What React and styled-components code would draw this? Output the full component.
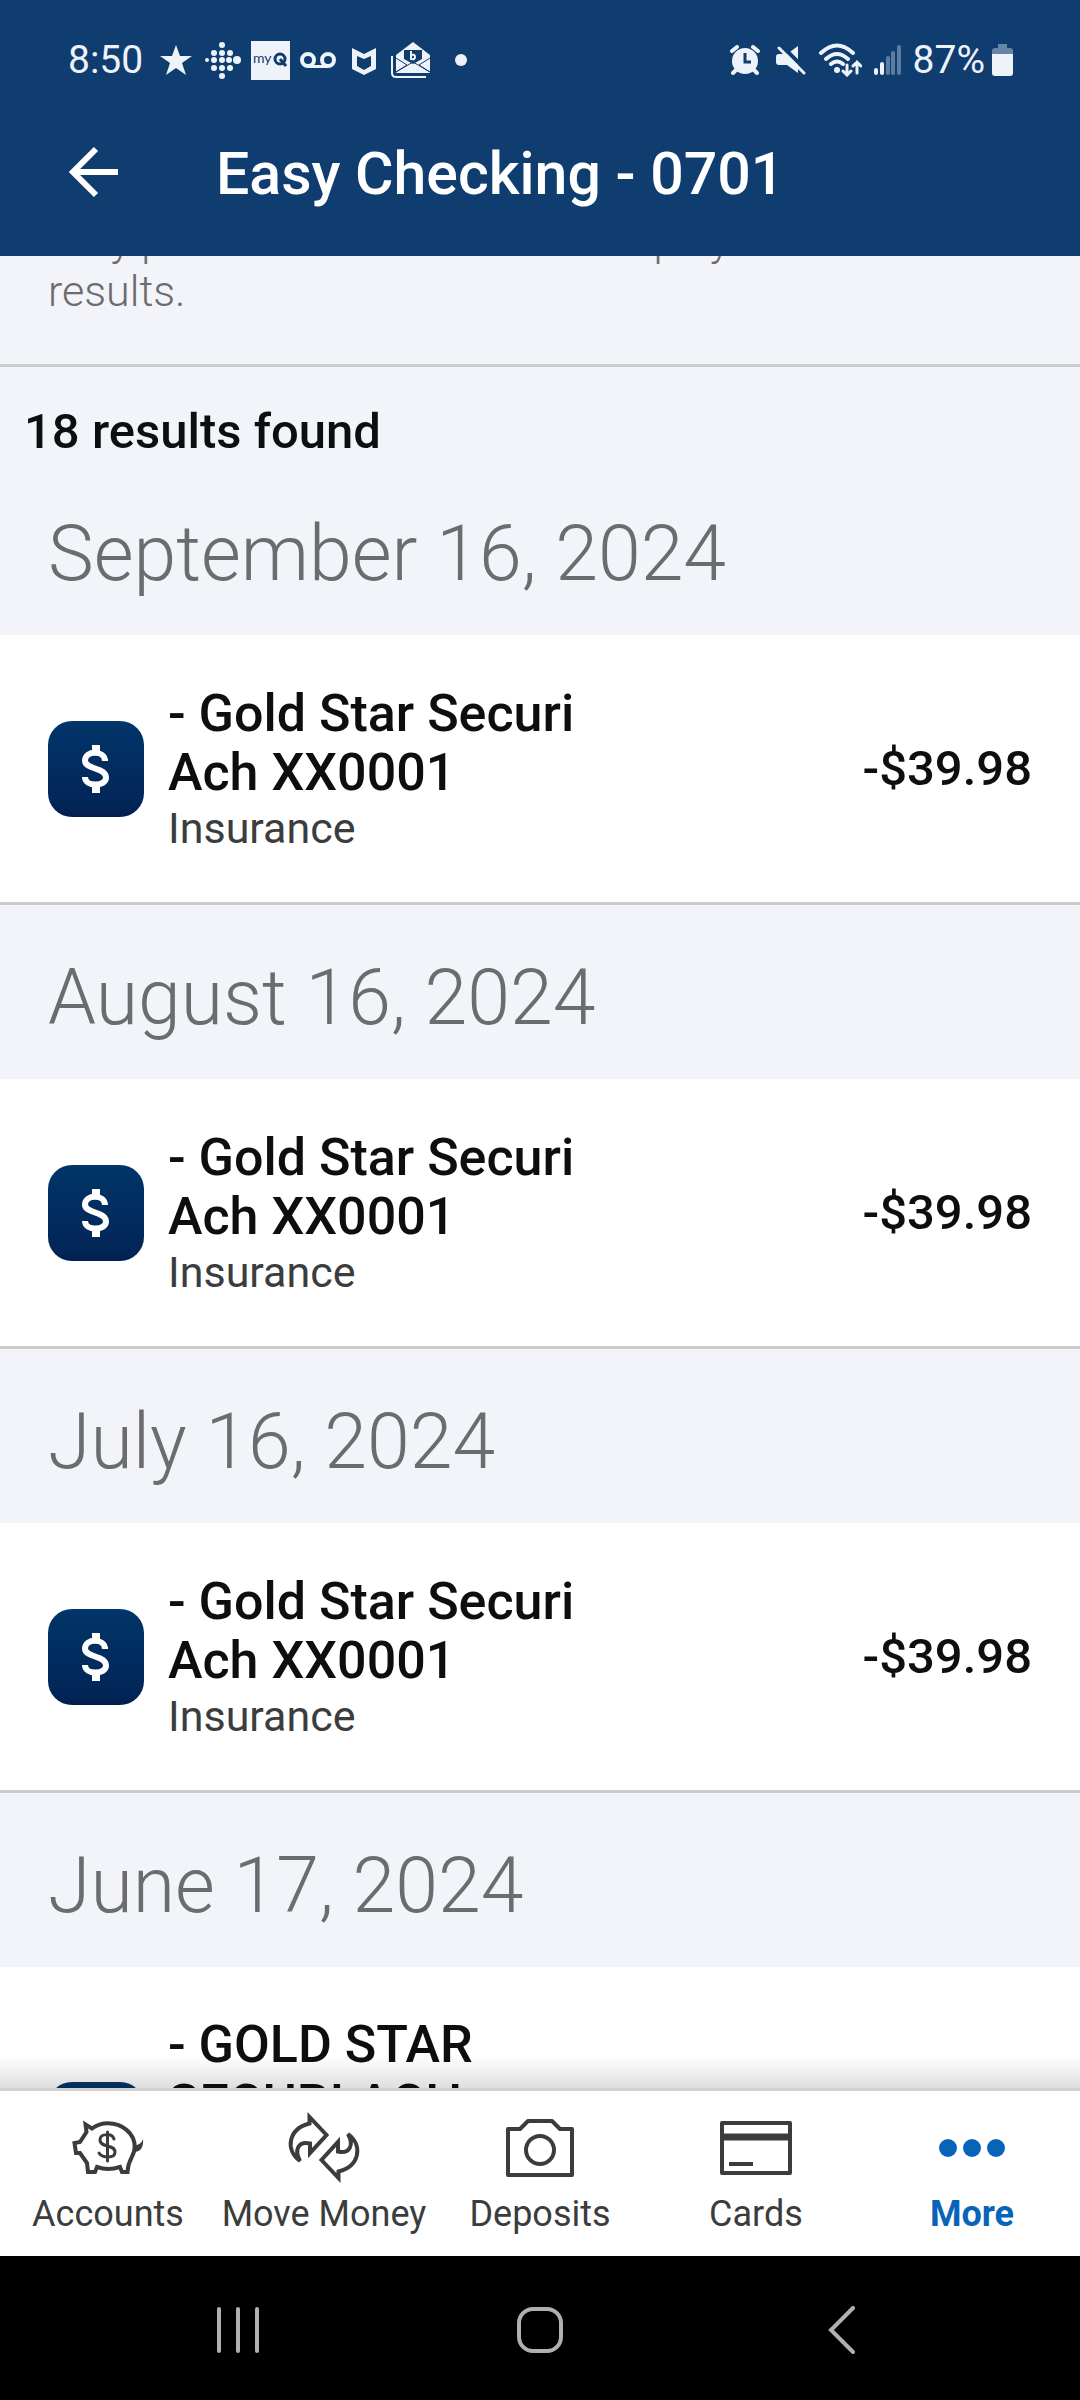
import React from 'react'
import styled, { createGlobalStyle } from 'styled-components'

const GlobalStyle = createGlobalStyle`
    * {
        box-sizing: border-box;
    }

    body {
        margin: 0;
        background: #f3f4f9;
        font-family: Roboto, "Liberation Sans", sans-serif;
        color: #0c0e10;
    }

    h1, h2, h3, p, ul {
        margin: 0;
        padding: 0;
    }

    button {
        border: 0;
        padding: 0;
        background: none;
        font: inherit;
        color: inherit;
    }
`

const Screen = styled.div`
    display: flex;
    flex-direction: column;
    height: 100vh;
    overflow: hidden;
`

const TopArea = styled.header`
    flex: none;
    height: 256px;
    background: #103d6f;
    color: #fff;
`

const StatusBar = styled.div`
    display: flex;
    align-items: center;
    justify-content: space-between;
    height: 120px;
    padding: 0 67px 0 68px;
    color: #eef2f9;
    font-size: 39px;
    line-height: 48px;

    svg {
        display: block;
        fill: currentColor;
    }
`

const StatusGroup = styled.div`
    display: flex;
    align-items: center;
    gap: ${(props) => props.$gap}px;
`

const TitleBar = styled.div`
    display: flex;
    align-items: center;
    height: 108px;
    padding-left: 66px;
    gap: 92px;

    h1 {
        font-size: 59px;
        font-weight: 500;
        line-height: 72px;
    }

    svg {
        display: block;
    }
`

const Content = styled.main`
    flex: 1;
    min-height: 0;
    display: flex;
    flex-direction: column;
    overflow: hidden;
`

// the list is scrolled, so the note above it is cut by the header
const Note = styled.div`
    flex: none;
    display: flex;
    flex-direction: column;
    justify-content: flex-end;
    height: 111px;
    padding: 0 48px 47px;
    border-bottom: 3px solid #cacccc;
    color: #6b6c6e;
    font-size: 43px;
    font-weight: 300;
    line-height: 51px;
    overflow: hidden;
`

const ResultCount = styled.h2`
    flex: none;
    padding: 36px 24px 0;
    font-size: 49px;
    font-weight: 500;
    line-height: 58px;
`

const MonthTitle = styled.h3`
    flex: none;
    height: 174px;
    padding: 47px 48px 0;
    color: #6b6c6e;
    font-size: 77px;
    font-weight: 300;
    line-height: 92px;
`

const Item = styled.div`
    flex: none;
    display: flex;
    align-items: center;
    gap: 24px;
    min-height: 270px;
    padding: 48px;
    background: #fff;
    border-bottom: 3px solid #cacccc;
`

const ItemIcon = styled.div`
    display: flex;
    align-items: center;
    justify-content: center;
    width: 96px;
    height: 96px;
    border-radius: 24px;
    background: linear-gradient(#013569, #022557 90%, #011f4b);
`

const ItemText = styled.div`
    flex: 1;
`

const ItemName = styled.p`
    width: 440px;
    font-size: 52px;
    font-weight: 500;
    line-height: 59px;
`

const Category = styled.p`
    color: #3b3c3e;
    font-size: 43px;
    line-height: 52px;
`

const Amount = styled.span`
    font-size: 49px;
    font-weight: 500;
`

const TabBar = styled.nav`
    position: relative;
    flex: none;
    display: grid;
    grid-template-columns: repeat(5, 1fr);
    height: 168px;
    background: #fff;
    border-top: 3px solid #d2d2d2;

    &::before {
        content: "";
        position: absolute;
        left: 0;
        right: 0;
        bottom: 100%;
        height: 32px;
        margin-bottom: 3px;
        background: linear-gradient(rgba(0, 0, 0, 0), rgba(0, 0, 0, 0.13));
    }
`

const Tab = styled.a`
    display: flex;
    flex-direction: column;
    align-items: center;
    padding-top: 18px;
    color: ${(props) => (props.$active ? '#0864b9' : '#3b3c3c')};
    font-size: 36px;
    font-weight: ${(props) => (props.$active ? 700 : 400)};
    line-height: 44px;
    text-decoration: none;
    white-space: nowrap;

    svg {
        display: block;
        margin-bottom: 7px;
    }
`

const SystemBar = styled.div`
    flex: none;
    display: grid;
    grid-template-columns: repeat(3, 1fr);
    height: 144px;
    padding: 4px 87px 0;
    background: #000;

    button {
        display: flex;
        align-items: center;
        justify-content: center;
    }
`

const transactions = [
    { date: 'September 16, 2024', name: '- Gold Star Securi Ach XX0001', category: 'Insurance', amount: '-$39.98' },
    { date: 'August 16, 2024', name: '- Gold Star Securi Ach XX0001', category: 'Insurance', amount: '-$39.98' },
    { date: 'July 16, 2024', name: '- Gold Star Securi Ach XX0001', category: 'Insurance', amount: '-$39.98' },
    { date: 'June 17, 2024', name: '- GOLD STAR SECURI ACH XXXXXX0001', category: 'Insurance', amount: '-$39.98' },
]

const dots = [
    [18, 3, 3], [10, 11, 3], [18, 11, 3], [26, 11, 3],
    [3, 18, 2], [10, 18, 3], [18, 18, 3], [25, 18, 3], [33, 18, 4],
    [10, 26, 3], [18, 26, 3], [26, 26, 3], [18, 34, 3],
]

function NotificationIcons() {
    return (
        <>
            <svg width="41" height="32" viewBox="-7 0 41 32">
                <path d="M16 1l4 11h12l-10 7 4 12-10-7-10 7 4-12L0 12h12z" />
            </svg>
            <svg width="37" height="37" viewBox="0 0 37 37">
                {dots.map(([x, y, r]) => <circle key={x + '-' + y} cx={x} cy={y} r={r} />)}
            </svg>
            <svg width="39" height="39" viewBox="0 0 39 39">
                <path d="M0 0h39v39H0z" />
                <text x="2" y="22" fontSize="14" fill="#103d6f" fontFamily="Lato">my</text>
                <g fill="none" stroke="#103d6f" strokeWidth="3">
                    <circle cx="29" cy="18" r="5" />
                    <path d="M29 18l6 7" />
                </g>
            </svg>
            <svg width="36" height="18" viewBox="0 0 36 18">
                <g fill="none" stroke="currentColor" strokeWidth="4">
                    <circle cx="8" cy="9" r="6" />
                    <circle cx="28" cy="9" r="6" />
                    <path d="M8 15.5h20" strokeWidth="3" />
                </g>
            </svg>
            <svg width="35" height="29" viewBox="-5 -1 35 29">
                <path d="M1 1l12 6 12-6v21l-12 6-12-6zM6 9v10l7 4 7-4V9l-7 3z" fillRule="evenodd" />
            </svg>
            <svg width="40" height="38" viewBox="0 0 40 38">
                <path d="M1 15v17q0 4 4 4h30" fill="none" stroke="currentColor" strokeWidth="2" />
                <path d="M5 14L22 1l17 13v18H5z" />
                <path d="M5 17l11 7L5 31M39 17l-11 7 11 7M5 31l17-10 17 10" fill="none" stroke="#103d6f" strokeWidth="1" />
                <path d="M13 9h18v9l-9 5-9-5z" fill="#103d6f" />
                <path d="M20 10v8q4 1 4-2t-4-2" fill="none" stroke="currentColor" strokeWidth="2" />
            </svg>
            <svg width="26" height="12" viewBox="-14 0 26 12">
                <circle cx="6" cy="6" r="6" />
            </svg>
        </>
    )
}

function SystemIcons() {
    return (
        <>
            <svg width="34" height="30" viewBox="0 0 34 30">
                <circle cx="15" cy="16" r="13" />
                <path d="M2 6l5-4M28 6l-5-4M6 25l-3 3M24 25l3 3" stroke="currentColor" strokeWidth="4" strokeLinecap="round" />
                <path d="M15 8v9h6" fill="none" stroke="#103d6f" strokeWidth="3" />
            </svg>
            <svg width="30" height="30" viewBox="0 0 30 30">
                <path d="M22 1v27L11 20H3q-3 0-3-3v-5q0-3 3-3h8z" />
                <path d="M5 0l25 25" stroke="#103d6f" strokeWidth="4" />
                <path d="M3 3l25 25" stroke="currentColor" strokeWidth="3" strokeLinecap="round" />
            </svg>
            <svg width="44" height="34" viewBox="0 0 44 34">
                <g fill="none" stroke="currentColor" strokeWidth="4" strokeLinecap="round">
                    <path d="M3 10q16-15 32 0M8 16q11-10 22 0M13 21q6-5 12 0" />
                    <path d="M29 22v9M25 28l4 4 4-4M39 30V19M35 23l4-4 4 4" strokeWidth="3" />
                </g>
                <circle cx="19" cy="27" r="3" />
            </svg>
            <svg width="27" height="30" viewBox="0 0 27 30">
                <rect x="0" y="23" width="4" height="7" rx="2" />
                <rect x="6" y="17" width="4" height="13" rx="2" />
                <g opacity="0.35">
                    <rect x="12" y="11" width="4" height="19" rx="2" />
                    <rect x="17" y="6" width="4" height="24" rx="2" />
                    <rect x="23" y="0" width="4" height="30" rx="2" />
                </g>
            </svg>
        </>
    )
}

function DollarIcon() {
    return (
        <svg width="32" height="52" viewBox="0 0 32 52" fill="none" stroke="#fff" strokeWidth="6">
            <path d="M25 18C25 7 5 7 5 17.500C5 27 26 24 26 34.500C26 44 5 44 5 34" />
            <path d="M16 2v7M16 43v7" strokeWidth="8" />
        </svg>
    )
}

function PiggyIcon() {
    return (
        <svg width="76" height="76" viewBox="0 0 76 76" fill="none" stroke="currentColor" strokeWidth="4">
            <path d="M15.500 15.500L22 19.500Q29 14.300 37.700 14.300C52 14.300 64.700 24 64.700 38C64.700 48 58 49 57.500 63H52L50 58Q38 62 27 58L25 63H18L17 54L10 44H6L4.500 34L10 33L16.500 23z" />
            <path d="M65 36Q71 36 73 30Q74 42 65 43z" fill="currentColor" stroke="none" />
            <path d="M44 30c-2-6-14-6-14 1 0 8 15 4 15 12 0 7-13 6-16 1M37.500 23v29" strokeWidth="3" strokeLinecap="round" />
        </svg>
    )
}

function MoveIcon() {
    const arrow = 'M14 52C-1 41 2 20 23.500 14.500V8L40.500 26L24 44V34.500C12 32 8 41 14 52z'
    return (
        <svg width="76" height="76" viewBox="0 0 76 76" fill="none" stroke="currentColor" strokeWidth="4">
            <path d={arrow} />
            <path d={arrow} transform="rotate(180 38 38.500)" />
        </svg>
    )
}

function CameraIcon() {
    return (
        <svg width="76" height="76" viewBox="0 0 76 76" fill="none" stroke="currentColor" strokeWidth="4" strokeLinejoin="round">
            <path d="M6 20h12l8-8h24l8 8h12v46H6z" />
            <circle cx="38" cy="41" r="14" />
        </svg>
    )
}

function CardIcon() {
    return (
        <svg width="76" height="76" viewBox="0 0 76 76" fill="none" stroke="currentColor" strokeWidth="4" strokeLinejoin="round">
            <path d="M4 14h68v50H4z" />
            <path d="M4 28h68" strokeWidth="7" />
            <path d="M11 55h24" />
        </svg>
    )
}

function MoreIcon() {
    return (
        <svg width="76" height="76" viewBox="0 0 76 76" fill="currentColor">
            <circle cx="14" cy="39" r="9" />
            <circle cx="38" cy="39" r="9" />
            <circle cx="62" cy="39" r="9" />
        </svg>
    )
}

const tabs = [
    { label: 'Accounts', icon: <PiggyIcon /> },
    { label: 'Move Money', icon: <MoveIcon /> },
    { label: 'Deposits', icon: <CameraIcon /> },
    { label: 'Cards', icon: <CardIcon /> },
    { label: 'More', icon: <MoreIcon />, active: true },
]

function App() {
    return (
        <Screen>
            <GlobalStyle />
            <TopArea>
                <StatusBar>
                    <StatusGroup $gap={10}>
                        <span>8:50</span>
                        <NotificationIcons />
                    </StatusGroup>
                    <StatusGroup $gap={12}>
                        <SystemIcons />
                        <StatusGroup $gap={7}>
                            <span>87%</span>
                            <svg width="21" height="32" viewBox="0 0 21 32">
                                <path d="M6 0h9v4h3q3 0 3 3v3H0V7q0-3 3-3h3z" opacity="0.4" />
                                <path d="M0 10h21v19q0 3-3 3H3q-3 0-3-3z" />
                            </svg>
                        </StatusGroup>
                    </StatusGroup>
                </StatusBar>
                <TitleBar>
                    <button aria-label="Back">
                        <svg width="58" height="56" viewBox="0 0 58 56" fill="none" stroke="#fff" strokeWidth="6">
                            <path d="M30 3L7 26l23 23M7 26h45" />
                        </svg>
                    </button>
                    <h1>Easy Checking - 0701</h1>
                </TitleBar>
            </TopArea>
            <Content>
                <Note>
                    <p>Only posted transactions will display in search results.</p>
                </Note>
                <ResultCount>18 results found</ResultCount>
                {transactions.map((item) => (
                    <React.Fragment key={item.date}>
                        <MonthTitle>{item.date}</MonthTitle>
                        <Item>
                            <ItemIcon><DollarIcon /></ItemIcon>
                            <ItemText>
                                <ItemName>{item.name}</ItemName>
                                <Category>{item.category}</Category>
                            </ItemText>
                            <Amount>{item.amount}</Amount>
                        </Item>
                    </React.Fragment>
                ))}
            </Content>
            <TabBar>
                {tabs.map((tab) => (
                    <Tab key={tab.label} href="#" $active={tab.active}>
                        {tab.icon}
                        {tab.label}
                    </Tab>
                ))}
            </TabBar>
            <SystemBar>
                <button aria-label="Recent apps">
                    <svg width="42" height="48" viewBox="0 0 42 48" stroke="#b0b0b0" strokeWidth="4" strokeLinecap="round">
                        <path d="M2 3v42M21 3v42M40 3v42" />
                    </svg>
                </button>
                <button aria-label="Home">
                    <svg width="48" height="48" viewBox="0 0 48 48" fill="none" stroke="#b0b0b0" strokeWidth="4">
                        <rect x="3" y="3" width="42" height="42" rx="14" />
                    </svg>
                </button>
                <button aria-label="Go back">
                    <svg width="28" height="48" viewBox="0 0 28 48" fill="none" stroke="#b0b0b0" strokeWidth="4" strokeLinecap="round">
                        <path d="M25 2L3 24l22 22" />
                    </svg>
                </button>
            </SystemBar>
        </Screen>
    )
}

export default App
